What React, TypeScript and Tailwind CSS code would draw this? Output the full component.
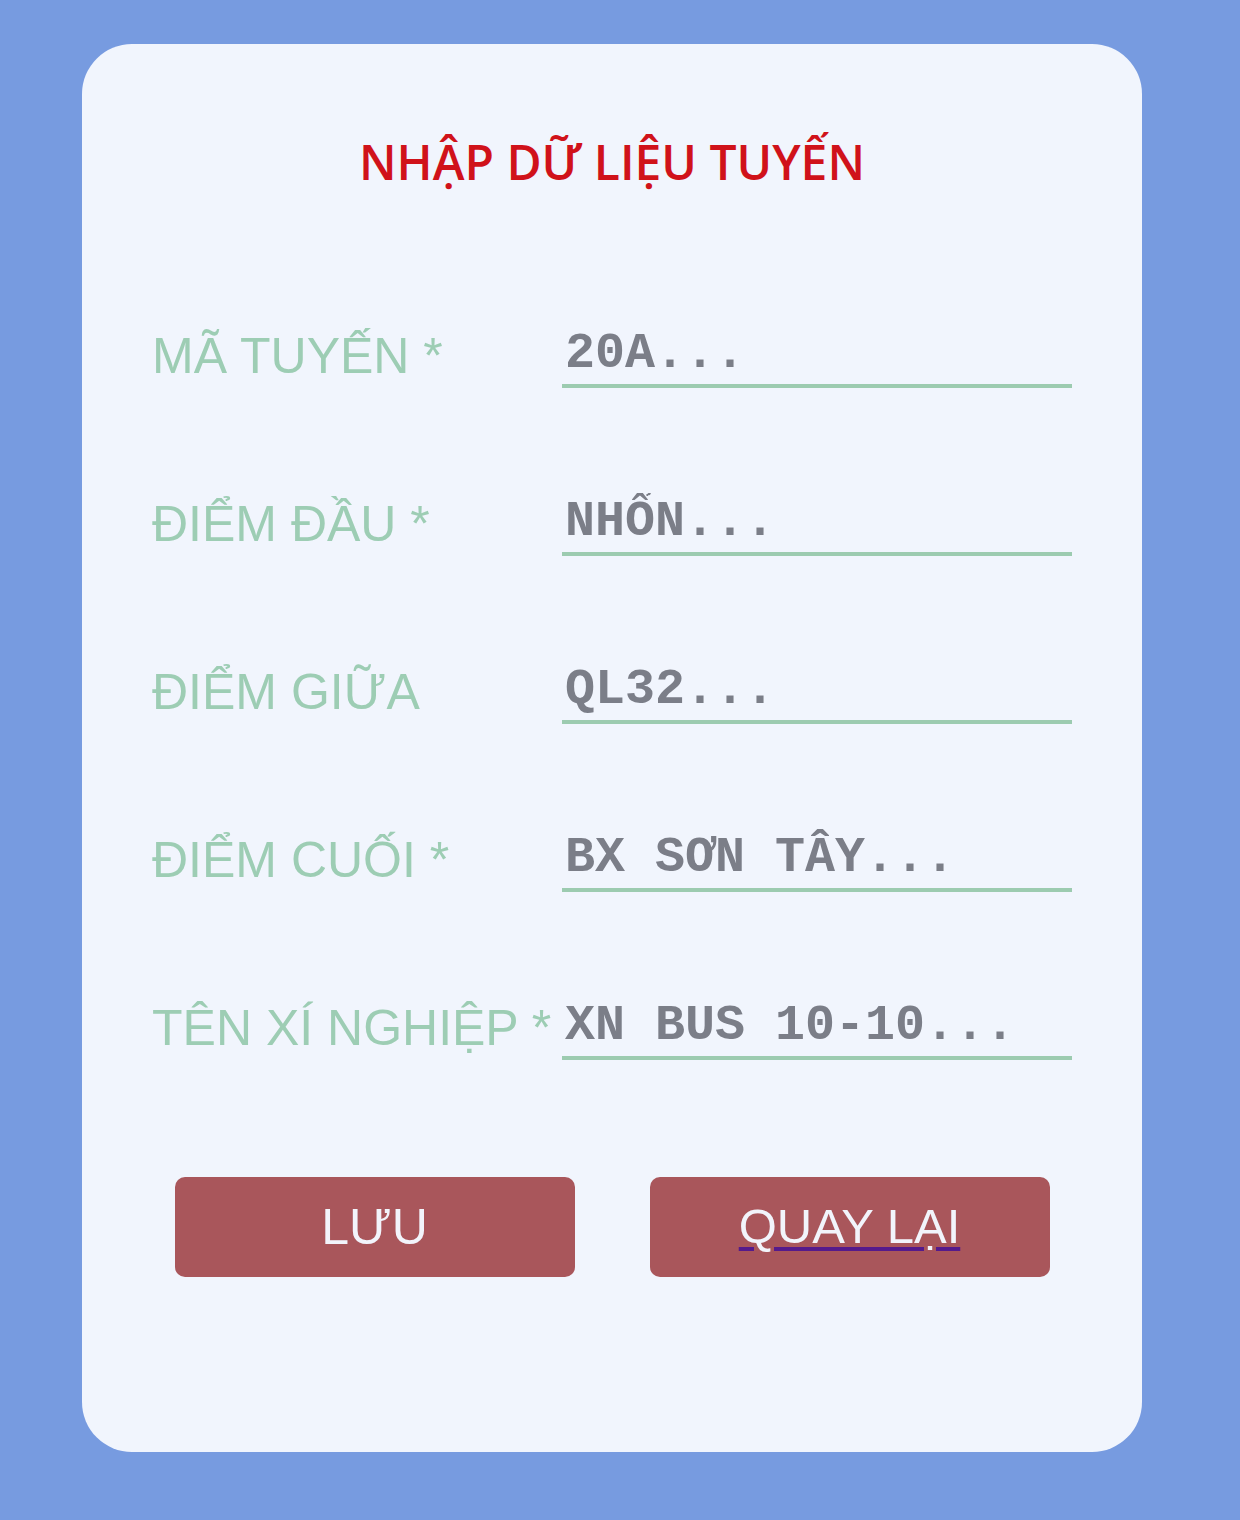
const fields = [
  { label: "MÃ TUYẾN *", hint: "20A..." },
  { label: "ĐIỂM ĐẦU *", hint: "NHỔN..." },
  { label: "ĐIỂM GIỮA", hint: "QL32..." },
  { label: "ĐIỂM CUỐI *", hint: "BX SƠN TÂY..." },
  { label: "TÊN XÍ NGHIỆP *", hint: "XN BUS 10-10..." },
];

function FieldRow({ label, hint }: { label: string; hint: string }) {
  return (
    <div className="flex h-[168px] items-end">
      <label className="w-[410px] shrink-0 pb-[7px] font-['Liberation_Sans',Arial,sans-serif] text-[50px] leading-none whitespace-nowrap text-[#9dcdb4]">
        {label}
      </label>
      <input
        type="text"
        placeholder={hint}
        className="h-[65px] w-[510px] border-b-4 border-[#9ccbb0] bg-transparent p-0 pl-[3px] font-['Liberation_Mono','Courier_New',monospace] text-[50px] font-bold text-[#7b7e88] outline-none placeholder:text-[#7b7e88]"
      />
    </div>
  );
}

function App() {
  return (
    <div className="min-h-[1520px] bg-[#779be0] pt-[44px]">
      <div className="ml-[82px] h-[1408px] w-[1060px] rounded-[50px] bg-[#f1f5fd] px-[70px] pt-[94px]">
        <h1 className="text-center font-['Open_Sans',sans-serif] text-[48px] leading-none font-semibold text-[#d0121a]">
          NHẬP DỮ LIỆU TUYẾN
        </h1>
        <form className="mt-[34px]">
          {fields.map((f) => (
            <FieldRow key={f.label} label={f.label} hint={f.hint} />
          ))}
          <div className="mt-[117px] flex justify-center gap-[75px]">
            <button
              type="button"
              className="flex h-[100px] w-[400px] items-center justify-center rounded-[10px] bg-[#a9565b] font-['Liberation_Sans',Arial,sans-serif] text-[50px] text-[#f2f4fb]"
            >
              LƯU
            </button>
            <a
              href="#"
              className="flex h-[100px] w-[400px] items-center justify-center rounded-[10px] bg-[#a9565b] font-['Liberation_Sans',Arial,sans-serif] text-[49px] text-[#f2f4fb] underline decoration-[#551a8b] decoration-4 underline-offset-[4px]"
            >
              QUAY LẠI
            </a>
          </div>
        </form>
      </div>
    </div>
  );
}

export default App;
